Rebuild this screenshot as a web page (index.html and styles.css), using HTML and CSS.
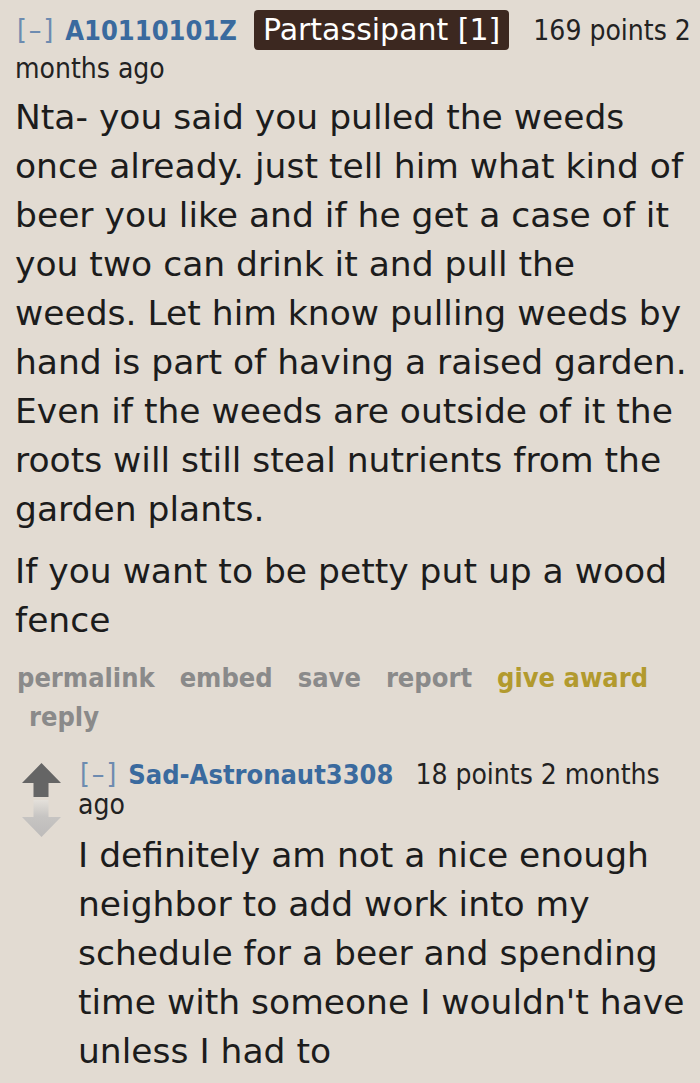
FILE: index.html
```html
<!DOCTYPE html>
<html>
<head>
<meta charset="utf-8">
<link rel="stylesheet" href="styles.css">
</head>
<body>
<div class="comment">
  <p class="tagline"><a class="expand">[–]</a><a class="author">A10110101Z</a><span class="flair">Partassipant [1]</span><span class="score">169 points</span> <time>2 months ago</time></p>
  <div class="md main-md">
    <p>Nta- you said you pulled the weeds once already. just tell him what kind of beer you like and if he get a case of it you two can drink it and pull the weeds. Let him know pulling weeds by hand is part of having a raised garden. Even if the weeds are outside of it the roots will still steal nutrients from the garden plants.</p>
    <p>If you want to be petty put up a wood fence</p>
  </div>
  <ul class="buttons">
    <li class="first">permalink</li>
    <li>embed</li>
    <li>save</li>
    <li>report</li>
    <li class="award">give award</li>
    <li>reply</li>
  </ul>
  <div class="child">
    <div class="midcol">
      <svg class="arrows" width="40" height="75" viewBox="0 0 40 75">
        <defs>
          <linearGradient id="dg" x1="0" y1="0" x2="0" y2="1">
            <stop offset="0" stop-color="#e4e0da"/>
            <stop offset="0.45" stop-color="#c6c4c2"/>
            <stop offset="1" stop-color="#bdbbba"/>
          </linearGradient>
        </defs>
        <path d="M19.5 0 L39 20 L26.5 20 L26.5 34 L11.5 34 L11.5 20 L0 20 Z" fill="#656565"/>
        <path d="M11.5 37 L26.5 37 L26.5 54 L39 54 L19.5 74 L0 54 L11.5 54 Z" fill="url(#dg)"/>
      </svg>
    </div>
    <div class="entry">
      <p class="tagline child-tag"><a class="expand">[–]</a><a class="author">Sad-Astronaut3308</a><span class="score">18 points</span> <time>2 months ago</time></p>
      <div class="md">
        <p>I definitely am not a nice enough neighbor to add work into my schedule for a beer and spending time with someone I wouldn't have unless I had to</p>
      </div>
    </div>
  </div>
</div>
</body>
</html>
```

FILE: styles.css
```css
html, body {
  margin: 0;
  padding: 0;
  background: #e2dbd2;
}

body {
  width: 700px;
  height: 1083px;
  overflow: hidden;
}

.comment {
  padding: 11px 0 0 15px;
}

.tagline {
  margin: 0;
  font-family: "DejaVu Sans Condensed", "DejaVu Sans", sans-serif;
  font-size: 28px;
  line-height: 38px;
  color: #222;
}

.expand {
  color: #6d8bb0;
  letter-spacing: 2px;
  margin-left: 2px;
  margin-right: 10px;
}

.author {
  color: #3a6a9e;
  font-weight: bold;
  font-size: 27px;
}

.flair {
  display: inline-block;
  background: #3c2820;
  color: #fff;
  font-family: "DejaVu Sans", sans-serif;
  font-size: 30px;
  line-height: 40px;
  padding: 0 9px;
  margin: -1px 24px -1px 17px;
  border-radius: 4px;
}

.score {
  color: #222;
}

time {
  color: #222;
}

.md {
  margin-top: 5px;
  font-family: "DejaVu Sans", Verdana, sans-serif;
  font-size: 34.5px;
  line-height: 49px;
  color: #1c1c1c;
}

.main-md {
  width: 675px;
}

.md p {
  margin: 0 0 13px 0;
}

.md p:last-child {
  margin-bottom: 0;
}

.buttons {
  list-style: none;
  margin: 13px 0 0 0;
  padding: 0 0 0 2px;
  font-family: "DejaVu Sans Condensed", "DejaVu Sans", sans-serif;
  font-weight: bold;
  font-size: 27px;
  line-height: 39px;
  color: #8a8a8a;
  display: flex;
  flex-wrap: wrap;
}

.buttons li {
  padding: 0 13px 0 12px;
}

.buttons li.first {
  padding-left: 0;
}

.buttons .award {
  color: #b29a2e;
}

.child {
  display: flex;
  margin-top: 24px;
  margin-left: 7px;
}

.midcol {
  width: 56px;
  flex: none;
  padding-top: 3px;
}

.arrows {
  display: block;
}

.entry {
  flex: 1;
}

.child-tag {
  line-height: 30px;
  padding-right: 30px;
}

.child-tag .author {
  margin-right: 22px;
}

.entry .md {
  margin-top: 11px;
}
```
